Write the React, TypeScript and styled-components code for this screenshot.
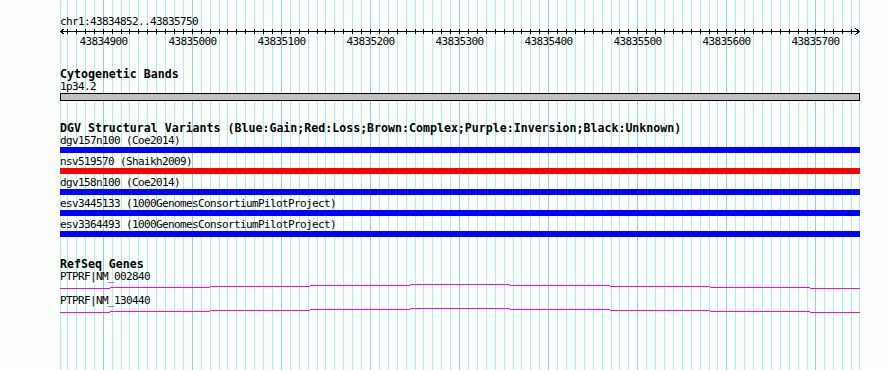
import React from "react";
import styled, { createGlobalStyle } from "styled-components";

const START = 43834852;
const END = 43835750;
const WIDTH = 800;
const LEFT = 60;

const toX = (bp: number) => Math.round(((bp - START) * WIDTH) / (END - START));

const variants = [
	{ name: "dgv157n100 (Coe2014)", color: "#0000ff" },
	{ name: "nsv519570 (Shaikh2009)", color: "#ff0000" },
	{ name: "dgv158n100 (Coe2014)", color: "#0000ff" },
	{ name: "esv3445133 (1000GenomesConsortiumPilotProject)", color: "#0000ff" },
	{ name: "esv3364493 (1000GenomesConsortiumPilotProject)", color: "#0000ff" },
];

const genes = ["PTPRF|NM_002840", "PTPRF|NM_130440"];

// the transcript line steps up and down one pixel every 100px
const geneSteps = [
	[0, 50, 5],
	[50, 150, 4],
	[150, 250, 3],
	[250, 350, 2],
	[350, 450, 1],
	[450, 550, 2],
	[550, 650, 3],
	[650, 750, 4],
	[750, 800, 5],
];

const gridPositions = () => {
	const out: { x: number; major: boolean }[] = [{ x: LEFT, major: false }];
	for (let bp = 43834860; bp <= END; bp += 10) {
		const x = Math.min(LEFT + toX(bp), LEFT + WIDTH - 1);
		out.push({ x, major: bp % 100 === 0 });
	}
	return out;
};

const rulerTicks = () => {
	const out: number[] = [];
	for (let bp = 43834860; bp < END; bp += 10) out.push(toX(bp));
	return out;
};

const rulerLabels = () => {
	const out: number[] = [];
	for (let bp = 43834900; bp < END; bp += 100) out.push(bp);
	return out;
};

const GridLines = () => (
	<Grid width={890} height={370}>
		{gridPositions().map((g, i) => (
			<line
				key={i}
				x1={g.x + 0.5}
				x2={g.x + 0.5}
				y1={0}
				y2={370}
				stroke={g.major ? "#87cefa" : "#afeeee"}
				strokeWidth={1}
			/>
		))}
	</Grid>
);

const Ruler = () => (
	<RulerSvg width={WIDTH} height={20}>
		<line x1={0} x2={WIDTH} y1={3.5} y2={3.5} stroke="#000" />
		{rulerTicks().map((x) => (
			<line key={x} x1={x + 0.5} x2={x + 0.5} y1={1} y2={6} stroke="#000" />
		))}
		<polyline points="4.5,0.5 0.5,3.5 4.5,6.5" fill="none" stroke="#000" />
		<polyline points="795.5,0.5 799.5,3.5 795.5,6.5" fill="none" stroke="#000" />
		{rulerLabels().map((bp) => (
			<RulerLabel key={bp} x={toX(bp) + 0.5} y={16.5} textAnchor="middle">
				{bp}
			</RulerLabel>
		))}
	</RulerSvg>
);

const GeneModel = () => (
	<GeneSvg width={WIDTH} height={12}>
		{geneSteps.map(([x1, x2, y]) => (
			<line key={x1} x1={x1} x2={x2} y1={y + 0.5} y2={y + 0.5} stroke="#ff00ff" />
		))}
	</GeneSvg>
);

export default function App() {
	return (
		<>
			<GlobalStyle />
			<Panel>
				<GridLines />
				<Content>
					<Overview>
						<Label>chr1:43834852..43835750</Label>
						<Ruler />
					</Overview>

					<Tracks>
						<Track>
							<TrackTitle>Cytogenetic Bands</TrackTitle>
							<Label>1p34.2</Label>
							<Band />
						</Track>

						<Track>
							<TrackTitle>
								DGV Structural Variants
								(Blue:Gain;Red:Loss;Brown:Complex;Purple:Inversion;Black:Unknown)
							</TrackTitle>
							<FeatureList>
								{variants.map((v) => (
									<Feature key={v.name}>
										<Label>{v.name}</Label>
										<Bar color={v.color} />
									</Feature>
								))}
							</FeatureList>
						</Track>

						<Track>
							<TrackTitle>RefSeq Genes</TrackTitle>
							{genes.map((g) => (
								<Feature key={g}>
									<Label>{g}</Label>
									<GeneModel />
								</Feature>
							))}
						</Track>
					</Tracks>
				</Content>
			</Panel>
		</>
	);
}

const GlobalStyle = createGlobalStyle`
	html, body {
		margin: 0;
		padding: 0;
		background: #fdfffd;
	}
	body {
		font-family: "DejaVu Sans Mono", "Liberation Mono", monospace;
		color: #000;
	}
`;

const Panel = styled.div`
	position: relative;
	width: 890px;
	height: 370px;
	overflow: hidden;
	background: #fdfffd;
`;

const Grid = styled.svg`
	position: absolute;
	left: 0;
	top: 0;
	shape-rendering: crispEdges;
`;

const Content = styled.div`
	position: relative;
	display: flex;
	flex-direction: column;
	width: ${WIDTH}px;
	padding: 16px 0 0 ${LEFT}px;
`;

const Overview = styled.div`
	display: flex;
	flex-direction: column;
	margin-bottom: 19px;
`;

const RulerSvg = styled.svg`
	display: block;
	overflow: visible;
	shape-rendering: crispEdges;
`;

const RulerLabel = styled.text`
	font-family: "DejaVu Sans Mono", "Liberation Mono", monospace;
	font-size: 11px;
	letter-spacing: -0.62px;
	fill: #000;
`;

const Tracks = styled.div`
	display: flex;
	flex-direction: column;
	gap: 20px;
`;

const Track = styled.section`
	display: flex;
	flex-direction: column;
`;

const TrackTitle = styled.div`
	font-size: 11.6px;
	font-weight: bold;
	line-height: 14px;
	white-space: nowrap;
`;

const Label = styled.div`
	font-size: 11px;
	letter-spacing: -0.62px;
	line-height: 12px;
	white-space: pre;
`;

const Band = styled.div`
	box-sizing: border-box;
	height: 8px;
	border: 1px solid #000;
	background: #c0c0c0;
`;

const FeatureList = styled.div`
	display: flex;
	flex-direction: column;
	gap: 3px;
`;

const Feature = styled.div`
	display: flex;
	flex-direction: column;
`;

const Bar = styled.div<{ color: string }>`
	height: 6px;
	background: ${({ color }) => color};
`;

const GeneSvg = styled.svg`
	display: block;
	shape-rendering: crispEdges;
`;
